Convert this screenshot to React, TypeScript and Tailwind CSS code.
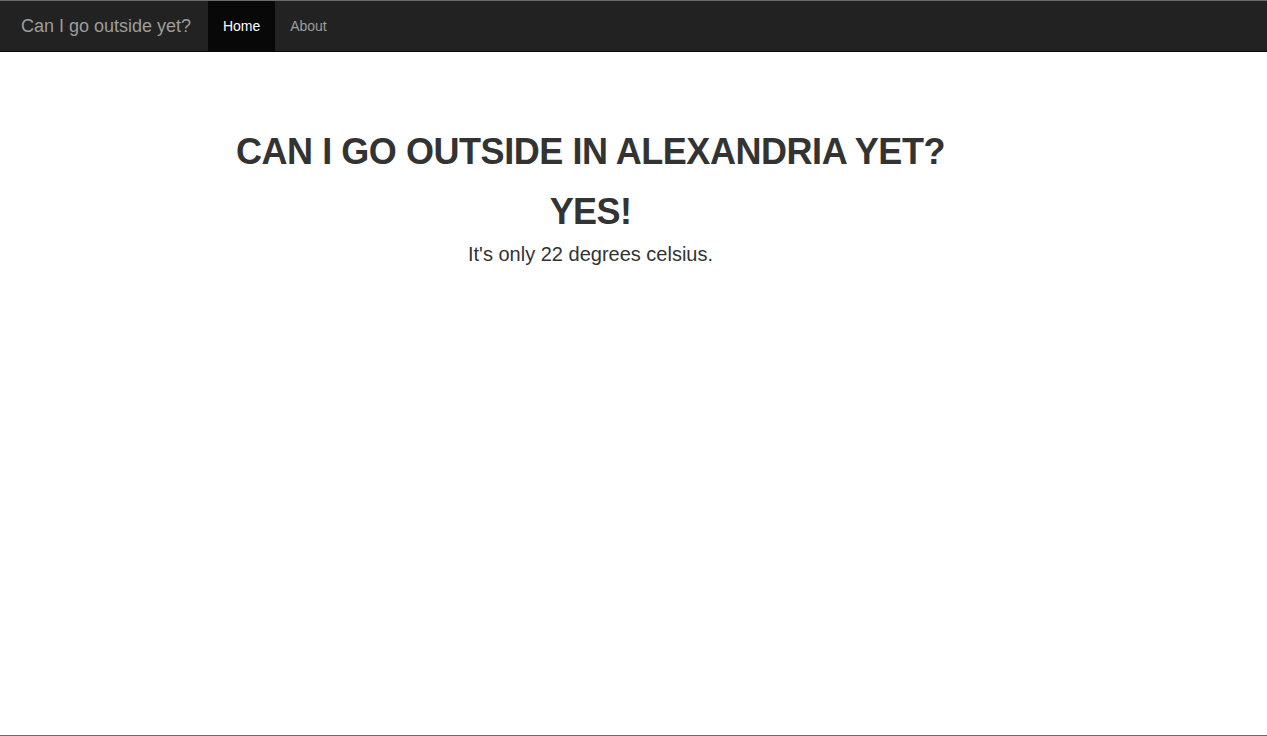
export default function App() {
  return (
    <div
      className="h-[736px] flex flex-col bg-white border-t border-b border-[#6b6b6b]"
      style={{ fontFamily: '"Liberation Sans", Arial, sans-serif' }}
    >
      <nav className="h-[51px] bg-[#222222] border-b border-[#080808] flex items-stretch">
        <a className="pl-[21px] pr-[17px] flex items-center text-[18px] text-[#9d9d9d]">
          Can I go outside yet?
        </a>
        <ul className="flex items-stretch text-[14px]">
          <li className="bg-[#080808] text-white w-[67px] flex items-center justify-center">
            Home
          </li>
          <li className="text-[#9d9d9d] px-[15px] flex items-center">About</li>
        </ul>
      </nav>

      <main className="flex-1 pr-[86px]">
        <div className="text-center text-[#333333]">
          <h1 className="mt-[80px] text-[36px] leading-[1.1] font-bold tracking-[-0.45px]">
            CAN I GO OUTSIDE IN ALEXANDRIA YET?
          </h1>
          <h1 className="mt-[20px] text-[36px] leading-[1.1] font-bold tracking-[-0.6px]">
            YES!
          </h1>
          <p className="mt-[8px] text-[20px] font-light">It's only 22 degrees celsius.</p>
        </div>
      </main>
    </div>
  );
}
